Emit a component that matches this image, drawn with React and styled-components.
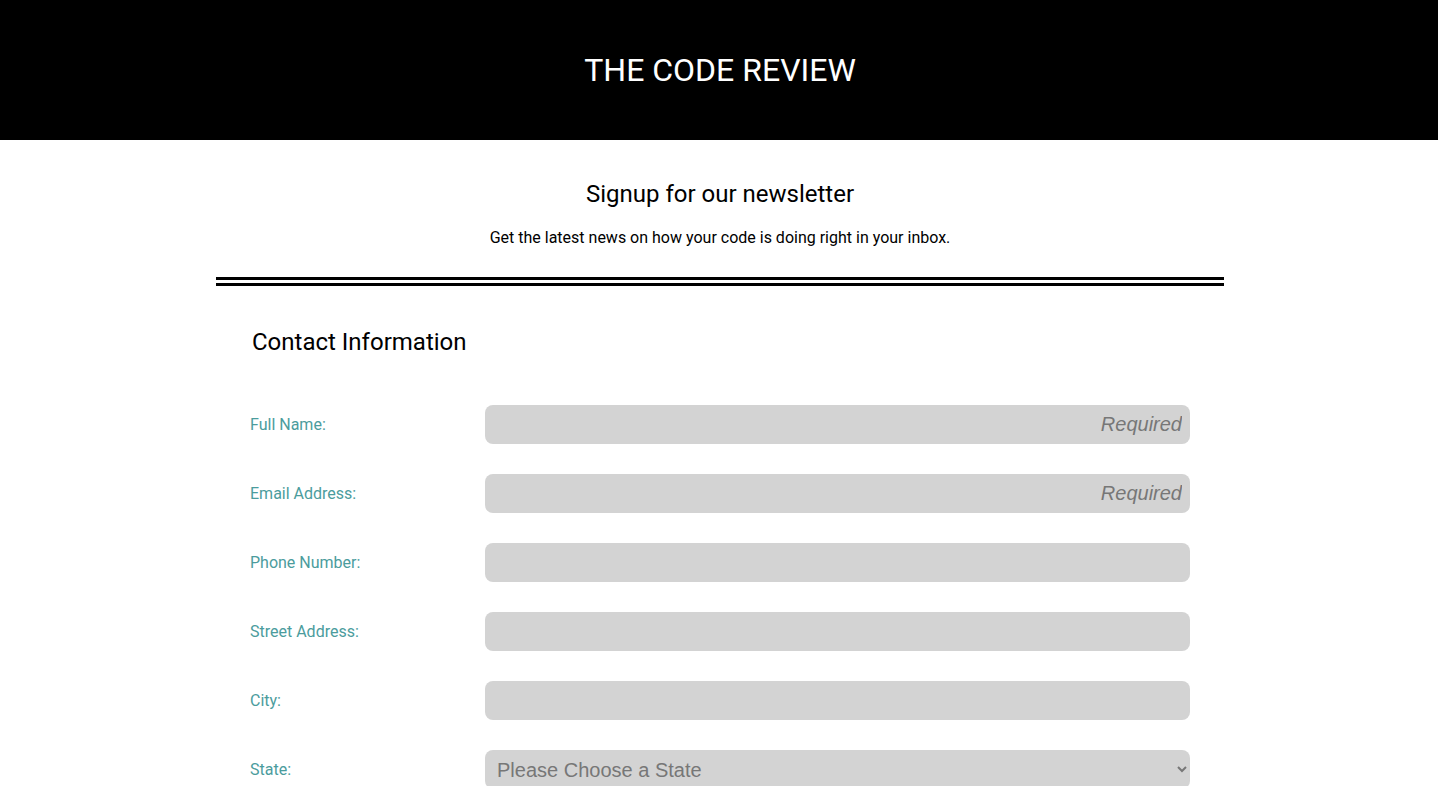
import React from "react";
import styled, { createGlobalStyle } from "styled-components";

const Global = createGlobalStyle`
  html, body { margin: 0; padding: 0; background: #fff; }
  body { font-family: Roboto, "Liberation Sans", sans-serif; color: #000; }
  * { box-sizing: border-box; }
`;

const Header = styled.header`
  background: #000;
  height: 140px;
  display: flex;
  align-items: center;
  justify-content: center;
  padding-left: 2px;
`;

const Title = styled.h1`
  margin: 0;
  color: #fff;
  font-weight: 400;
  font-size: 32px;
  letter-spacing: 0;
`;

const Main = styled.main`
  width: 1008px;
  margin: 0 auto;
  position: relative;
  left: 1px;
`;

const Intro = styled.section`
  text-align: center;
  padding-top: 37px;
  padding-bottom: 29px;
  border-bottom: 9px double #000;
`;

const IntroTitle = styled.h2`
  margin: 0 0 17px;
  font-size: 24px;
  font-weight: 400;
  line-height: 34px;
`;

const IntroText = styled.p`
  margin: 0;
  font-size: 16px;
  line-height: 20px;
`;

const Form = styled.form`
  padding: 41px 34px 0;
`;

const SectionTitle = styled.h3`
  margin: 0 0 48px 2px;
  font-size: 24px;
  font-weight: 400;
  line-height: 30px;
`;

const Row = styled.div`
  display: grid;
  grid-template-columns: 235px 1fr;
  align-items: center;
  margin-bottom: 30px;
`;

const Label = styled.label`
  color: #4b9c9d;
  font-size: 16px;
`;

const Input = styled.input`
  height: 39px;
  border: none;
  border-radius: 8px;
  background: #d3d3d3;
  font-family: "Liberation Sans", Arial, sans-serif;
  font-size: 20px;
  padding: 0 8px;
  text-align: right;
  outline: none;
  &::placeholder {
    color: #777;
    font-style: italic;
  }
`;

const Select = styled.select`
  height: 39px;
  border: none;
  border-radius: 8px;
  background: #d3d3d3;
  font-family: "Liberation Sans", Arial, sans-serif;
  font-size: 20px;
  color: #777;
  padding: 0 8px;
  outline: none;
`;

const fields = [
  { id: "name", label: "Full Name:", required: true },
  { id: "email", label: "Email Address:", required: true },
  { id: "phone", label: "Phone Number:" },
  { id: "street", label: "Street Address:" },
  { id: "city", label: "City:" },
];

export default function App() {
  return (
    <>
      <Global />
      <Header>
        <Title>THE CODE REVIEW</Title>
      </Header>
      <Main>
        <Intro>
          <IntroTitle>Signup for our newsletter</IntroTitle>
          <IntroText>Get the latest news on how your code is doing right in your inbox.</IntroText>
        </Intro>
        <Form>
          <SectionTitle>Contact Information</SectionTitle>
          {fields.map((f) => (
            <Row key={f.id}>
              <Label htmlFor={f.id}>{f.label}</Label>
              <Input id={f.id} placeholder={f.required ? "Required" : ""} />
            </Row>
          ))}
          <Row>
            <Label htmlFor="state">State:</Label>
            <Select id="state" defaultValue="">
              <option value="" disabled>Please Choose a State</option>
              <option>Alabama</option>
              <option>Alaska</option>
            </Select>
          </Row>
        </Form>
      </Main>
    </>
  );
}
